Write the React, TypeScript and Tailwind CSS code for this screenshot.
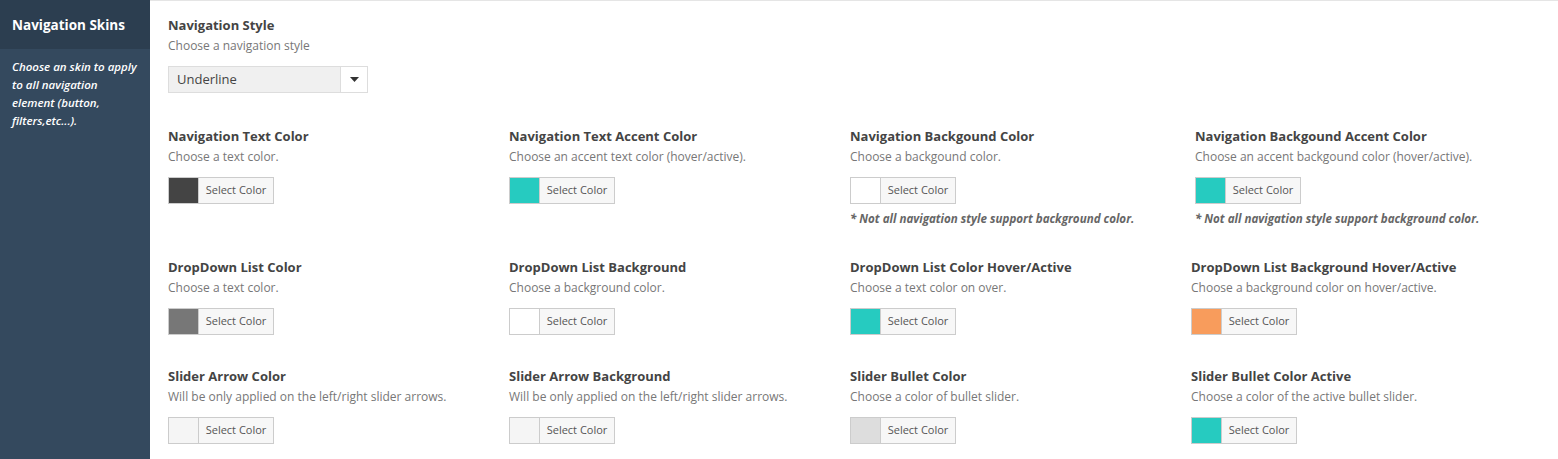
type Field = {
  title: string
  desc: string
  swatch: string
  note?: boolean
  shift?: boolean
}

const rows: Field[][] = [
  [
    { title: "Navigation Text Color", desc: "Choose a text color.", swatch: "bg-[#444444]" },
    { title: "Navigation Text Accent Color", desc: "Choose an accent text color (hover/active).", swatch: "bg-[#26cbc0]" },
    { title: "Navigation Backgound Color", desc: "Choose a backgound color.", swatch: "bg-white", note: true },
    { title: "Navigation Backgound Accent Color", desc: "Choose an accent backgound color (hover/active).", swatch: "bg-[#26cbc0]", note: true, shift: true },
  ],
  [
    { title: "DropDown List Color", desc: "Choose a text color.", swatch: "bg-[#777777]" },
    { title: "DropDown List Background", desc: "Choose a background color.", swatch: "bg-white" },
    { title: "DropDown List Color Hover/Active", desc: "Choose a text color on over.", swatch: "bg-[#26cbc0]" },
    { title: "DropDown List Background Hover/Active", desc: "Choose a background color on hover/active.", swatch: "bg-[#f89c5c]" },
  ],
  [
    { title: "Slider Arrow Color", desc: "Will be only applied on the left/right slider arrows.", swatch: "bg-[#f5f5f5]" },
    { title: "Slider Arrow Background", desc: "Will be only applied on the left/right slider arrows.", swatch: "bg-[#f5f5f5]" },
    { title: "Slider Bullet Color", desc: "Choose a color of bullet slider.", swatch: "bg-[#dddddd]" },
    { title: "Slider Bullet Color Active", desc: "Choose a color of the active bullet slider.", swatch: "bg-[#26cbc0]" },
  ],
]

function ColorButton({ swatch }: { swatch: string }) {
  return (
    <div className="mt-[11px] flex h-[27px] w-[106px] border border-[#cccccc] bg-[#f7f7f7]">
      <div className={`w-[30px] border-r border-[#cccccc] ${swatch}`} />
      <div className="flex flex-1 items-center justify-center text-[11px] text-[#555555]">Select Color</div>
    </div>
  )
}

function ColorField({ f }: { f: Field }) {
  return (
    <div className={f.shift ? "pl-[4px]" : ""}>
      <div className="text-[13px] font-bold leading-[18px] text-[#444444]">{f.title}</div>
      <div className="mt-[3px] text-[12px] leading-[18px] text-[#777777]">{f.desc}</div>
      <ColorButton swatch={f.swatch} />
      {f.note && (
        <div className="mt-[6px] text-[11.6px] font-bold italic leading-[18px] text-[#666666]">
          * Not all navigation style support background color.
        </div>
      )}
    </div>
  )
}

export default function App() {
  return (
    <div className="flex h-[459px] w-full bg-white font-['Open_Sans',sans-serif]">
      <aside className="w-[150px] shrink-0 bg-[#34495e]">
        <div className="flex h-[49px] items-center bg-[#2c3e50] px-[12px] pt-[2px] text-[13.5px] font-bold text-white">
          Navigation Skins
        </div>
        <p className="px-[12px] pt-[9px] text-[11.5px] font-semibold italic leading-[18px] text-white">
          Choose an skin to apply to all navigation element (button, filters,etc...).
        </p>
      </aside>

      <main className="flex-1 border-t border-[#e5e5e5] pl-[18px] pt-[15px]">
        <div>
          <div className="text-[13px] font-bold leading-[18px] text-[#444444]">Navigation Style</div>
          <div className="mt-[3px] text-[12px] leading-[18px] text-[#777777]">Choose a navigation style</div>
          <div className="mt-[11px] flex h-[27px] w-[200px] border border-[#dddddd] bg-[#f0f0f0]">
            <div className="flex flex-1 items-center px-[8px] text-[13px] text-[#444444]">Underline</div>
            <div className="flex w-[27px] items-center justify-center border-l border-[#dddddd] bg-white">
              <svg width="9" height="5" viewBox="0 0 9 5">
                <path d="M0 0h9L4.5 5z" fill="#333333" />
              </svg>
            </div>
          </div>
        </div>

        <div className="mt-[34px] flex flex-col">
          {rows.map((row, i) => (
            <div
              key={i}
              className={`grid grid-cols-[341px_341px_341px_341px] ${i === 1 ? "mt-[30px]" : ""} ${i === 2 ? "mt-[32px]" : ""}`}
            >
              {row.map((f) => (
                <ColorField key={f.title} f={f} />
              ))}
            </div>
          ))}
        </div>
      </main>
    </div>
  )
}
